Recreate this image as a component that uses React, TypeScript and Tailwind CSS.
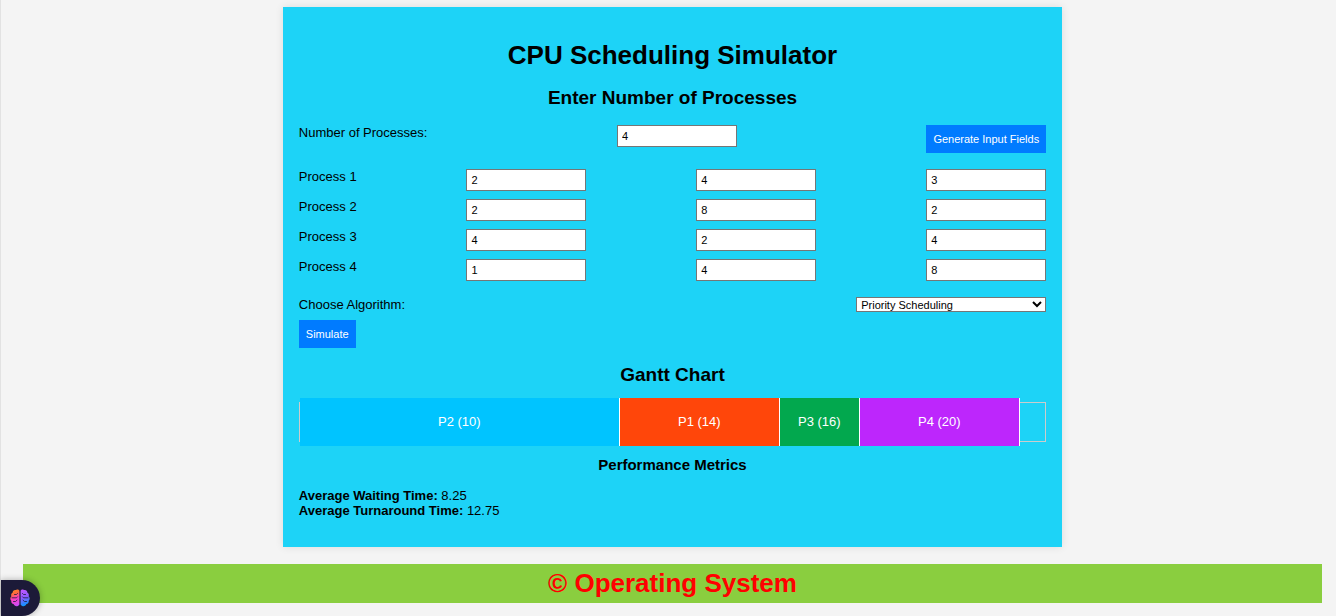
import { useState } from "react";

type Process = { id: number; arrival: string; burst: string; priority: string };

const initialProcesses: Process[] = [
  { id: 1, arrival: "2", burst: "4", priority: "3" },
  { id: 2, arrival: "2", burst: "8", priority: "2" },
  { id: 3, arrival: "4", burst: "2", priority: "4" },
  { id: 4, arrival: "1", burst: "4", priority: "8" },
];

const blocks = [
  { label: "P2 (10)", units: 8, color: "bg-[#00c4ff]" },
  { label: "P1 (14)", units: 4, color: "bg-[#ff460a]" },
  { label: "P3 (16)", units: 2, color: "bg-[#02a84e]" },
  { label: "P4 (20)", units: 4, color: "bg-[#bd26fc]" },
];

const PIXELS_PER_UNIT = 40;

const fieldClass =
  "h-[22px] w-[120px] border border-[#767676] bg-white px-1 text-[11px] text-black";
const buttonClass =
  "h-7 bg-[#007bff] px-[7px] text-[11px] text-white";

function NumberField({ label, value }: { label: string; value: string }) {
  const [text, setText] = useState(value);
  return (
    <input
      type="text"
      inputMode="numeric"
      aria-label={label}
      value={text}
      onChange={(e) => setText(e.target.value)}
      className={fieldClass}
    />
  );
}

function BrainIcon() {
  return (
    <svg width="20" height="18" viewBox="0 0 20 18" aria-hidden="true">
      <defs>
        <linearGradient id="left-lobe" gradientUnits="userSpaceOnUse" x1="2" y1="1" x2="9" y2="17">
          <stop offset="0" stopColor="#ff8a1f" />
          <stop offset="0.25" stopColor="#ff6a3d" />
          <stop offset="0.5" stopColor="#ff3fc0" />
          <stop offset="1" stopColor="#c44dff" />
        </linearGradient>
        <linearGradient id="right-lobe" gradientUnits="userSpaceOnUse" x1="11" y1="1" x2="17" y2="17">
          <stop offset="0" stopColor="#c455ff" />
          <stop offset="0.5" stopColor="#8a5cff" />
          <stop offset="0.85" stopColor="#1e8cff" />
          <stop offset="1" stopColor="#00a8ff" />
        </linearGradient>
      </defs>
      <path
        fill="url(#left-lobe)"
        d="M9.400 1.800C8.800.4 6.800 0 5.700 1.100 4 .8 2.600 2 2.700 3.600 1.200 4.300.7 6 1.400 7.300 0 8.500 0 10.600 1.300 11.700 1 13.400 2 14.800 3.600 15.100 4.200 16.900 6.300 17.700 7.800 16.900 8.800 16.600 9.400 15.900 9.400 15Z"
      />
      <path
        fill="url(#right-lobe)"
        d="M10.600 1.800C11.200.4 13.200 0 14.300 1.100 16 .8 17.400 2 17.300 3.600 18.800 4.300 19.300 6 18.600 7.300 20 8.500 20 10.600 18.700 11.700 19 13.400 18 14.800 16.400 15.100 15.800 16.900 13.700 17.700 12.200 16.900 11.200 16.600 10.600 15.900 10.600 15Z"
      />
      <path
        fill="none"
        stroke="#1c1a38"
        strokeWidth="0.8"
        strokeLinecap="round"
        strokeLinejoin="round"
        d="M4.500 5.500H6.500L7.500 4.500M2 8.800H6.500L7.500 7.800M3.500 12.500H5.500L7 11.200M15.500 5.500H13.500L12.500 4.500M18 8.800H13.500L12.500 7.800M16.500 12.500H14.500L13 11.200"
      />
    </svg>
  );
}

export default function App() {
  const [count, setCount] = useState("4");
  const [algorithm, setAlgorithm] = useState("priority");

  return (
    <div className="min-h-screen border-l border-[#e2e2e2] bg-[#f4f4f4] pt-[7px] pr-[14px] pb-3 pl-[22px] font-['Liberation_Sans',Arial,sans-serif] text-[13px] leading-[15px] text-black">
      <main className="mx-auto w-3/5 bg-[#1dd3f7] px-4 pt-8 pb-[29px] shadow-[0_0_8px_rgba(0,0,0,0.1)]">
        <h1 className="text-center text-[26px] leading-8 font-bold">CPU Scheduling Simulator</h1>
        <h2 className="mt-4 text-center text-[19px] leading-[22px] font-bold">
          Enter Number of Processes
        </h2>

        <div className="mt-4 flex items-start justify-between">
          <label htmlFor="process-count">Number of Processes:</label>
          <input
            id="process-count"
            type="text"
            inputMode="numeric"
            value={count}
            onChange={(e) => setCount(e.target.value)}
            className={fieldClass}
          />
          <button type="button" className={buttonClass}>
            Generate Input Fields
          </button>
        </div>

        <div className="mt-4 flex flex-col gap-2">
          {initialProcesses.map((p) => (
            <div
              key={p.id}
              role="group"
              aria-labelledby={`process-${p.id}`}
              className="flex items-start justify-between"
            >
              <span id={`process-${p.id}`}>Process {p.id}</span>
              <NumberField label="Arrival time" value={p.arrival} />
              <NumberField label="Burst time" value={p.burst} />
              <NumberField label="Priority" value={p.priority} />
            </div>
          ))}
        </div>

        <div className="mt-4 flex items-start justify-between">
          <label htmlFor="algorithm">Choose Algorithm:</label>
          <select
            id="algorithm"
            value={algorithm}
            onChange={(e) => setAlgorithm(e.target.value)}
            className="h-[15px] w-[190px] border border-[#767676] bg-white text-[11px] leading-[13px] text-black"
          >
            <option value="fcfs">First Come First Serve</option>
            <option value="sjf">Shortest Job First</option>
            <option value="priority">Priority Scheduling</option>
            <option value="rr">Round Robin</option>
          </select>
        </div>
        <button type="button" className={`mt-2 block ${buttonClass}`}>
          Simulate
        </button>

        <section>
          <h2 className="mt-4 text-center text-[19px] leading-[22px] font-bold">Gantt Chart</h2>
          <div className="mt-4 flex h-10 items-center border border-[#cccccc]">
            {blocks.map((b) => (
              <div
                key={b.label}
                className={`flex h-12 shrink-0 items-center justify-center border-r border-white pb-0.5 text-[13px] text-white ${b.color}`}
                style={{ width: b.units * PIXELS_PER_UNIT }}
              >
                {b.label}
              </div>
            ))}
          </div>
        </section>

        <section>
          <h3 className="mt-[14px] text-center text-[15px] leading-[17px] font-bold">
            Performance Metrics
          </h3>
          <p className="mt-[15px]">
            <strong>Average Waiting Time:</strong> 8.25
            <br />
            <strong>Average Turnaround Time:</strong> 12.75
          </p>
        </section>
      </main>

      <footer className="mt-[17px] bg-[#8ace3f] py-1 text-center text-[26px] leading-[31px] font-bold text-[#ff0000]">
        © Operating System
      </footer>

      <button
        type="button"
        aria-label="Open assistant"
        className="fixed bottom-0 left-px flex h-9 w-[39px] items-center justify-center rounded-r-full bg-[#1c1a38] pr-0.5 shadow-[0_0_6px_rgba(0,0,0,0.3)]"
      >
        <BrainIcon />
      </button>
    </div>
  );
}
